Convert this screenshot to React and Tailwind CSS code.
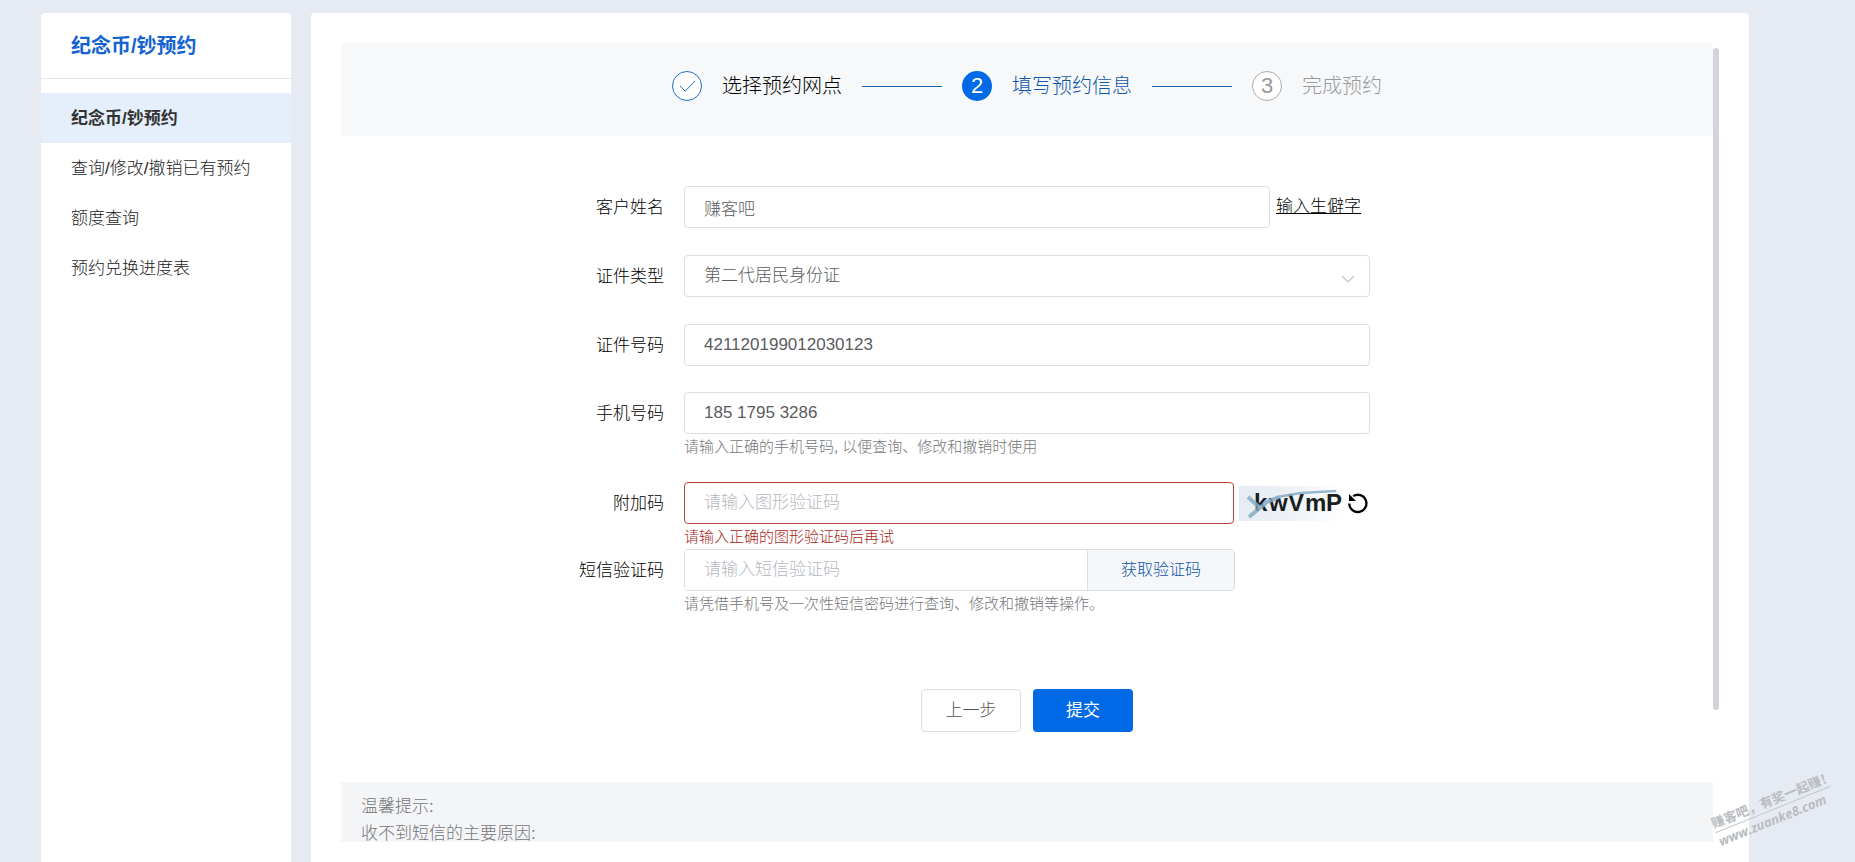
import { useState } from 'react';

const MENU = ['纪念币/钞预约', '查询/修改/撤销已有预约', '额度查询', '预约兑换进度表'];

const inputClass =
  'block h-[42px] w-full min-w-0 rounded border border-[#dcdfe2] bg-white px-[19px] text-[17px] text-[#5a5c60] placeholder-[#b4b8c0] outline-none focus:border-[#0069e5]';

function Sidebar() {
  return (
    <aside className="w-[250px] shrink-0 rounded-t bg-white">
      <h1 className="border-b border-[#e3e8ec] px-[30px] pt-[17px] pb-4 text-xl leading-8 font-bold text-[#1463d0]">
        纪念币/钞预约
      </h1>
      <nav className="pt-3.5">
        {MENU.map((item, i) => (
          <a
            key={item}
            href="#"
            className={`block h-[50px] px-[30px] text-[17px] leading-[52px] ${
              i === 0 ? 'bg-[#e4effb] font-bold text-[#333333]' : 'text-[#1c1c1c]'
            }`}
          >
            {item}
          </a>
        ))}
      </nav>
    </aside>
  );
}

function Steps() {
  return (
    <ol className="flex h-[93px] items-start justify-center gap-5 rounded bg-[#f6f8fa] pt-7 text-xl leading-[30px]">
      <li className="flex items-center gap-5">
        <svg className="h-[30px] w-[30px]" viewBox="0 0 30 30" fill="none" stroke="#1d6fc4">
          <circle cx="15" cy="15" r="14.5" fill="#ffffff" />
          <path d="M8 15l5.2 5.2L23 10" />
        </svg>
        <span className="text-black">选择预约网点</span>
      </li>
      <li aria-hidden="true" className="mt-[15px] h-px w-20 bg-[#1d64ad]" />
      <li className="flex items-center gap-5">
        <span className="h-[30px] w-[30px] rounded-full bg-[#0069e5] text-center text-[22px] text-white">2</span>
        <span className="text-[#0f55a8]">填写预约信息</span>
      </li>
      <li aria-hidden="true" className="mt-[15px] h-px w-20 bg-[#1d64ad]" />
      <li className="flex items-center gap-5 text-[#98999c]">
        <span className="h-[30px] w-[30px] rounded-full border border-[#a9abae] bg-white text-center text-[22px] leading-7">
          3
        </span>
        <span>完成预约</span>
      </li>
    </ol>
  );
}

function Field({ id, label, hint, error, className = '', children }) {
  return (
    <div className={`grid grid-cols-4 ${className}`}>
      <label htmlFor={id} className="h-[42px] pr-5 text-right text-[17px] leading-[44px] text-black">
        {label}
      </label>
      <div className="col-span-2">
        {children}
        {hint && (
          <p className={`text-[15px] leading-[25px] ${error ? 'text-[#a82418]' : 'text-[#74767a]'}`}>{hint}</p>
        )}
      </div>
    </div>
  );
}

function Captcha() {
  return (
    <svg className="h-[35px] w-[104px]" viewBox="0 0 104 35" role="img" aria-label="图形验证码">
      <defs>
        <linearGradient id="captcha-bg" x1="0" y1="0" x2="1" y2="0">
          <stop offset="0" stopColor="#e6ecf3" />
          <stop offset="0.5" stopColor="#eef2f6" />
          <stop offset="1" stopColor="#ffffff" />
        </linearGradient>
      </defs>
      <rect width="104" height="35" fill="url(#captcha-bg)" />
      <text
        x="15 30 49 66 87"
        y="25"
        fontSize="24"
        fontWeight="700"
        fill="#1c1d20"
        fontFamily="'Liberation Sans', sans-serif"
      >
        kwVmP
      </text>
      <g fill="none" stroke="#86abc6" strokeOpacity="0.85">
        <path d="M10 31L28 16L40 11" strokeWidth="4" />
        <path d="M38 11L62 7L97 5" strokeWidth="2.5" />
        <path d="M9 11L20 21" strokeWidth="4" />
      </g>
    </svg>
  );
}

function BookingForm() {
  const [name, setName] = useState('赚客吧');
  const [idNumber, setIdNumber] = useState('421120199012030123');
  const [phone, setPhone] = useState('185 1795 3286');
  const [captcha, setCaptcha] = useState('');
  const [smsCode, setSmsCode] = useState('');

  return (
    <form className="mt-[50px]" onSubmit={(e) => e.preventDefault()}>
      <Field id="name" label="客户姓名" className="mb-[27px]">
        <div className="flex items-center gap-1.5">
          <input id="name" type="text" value={name} onChange={(e) => setName(e.target.value)} className={inputClass} />
          <a href="#" className="w-[94px] shrink-0 text-[17px] text-black underline">
            输入生僻字
          </a>
        </div>
      </Field>

      <Field id="id-type" label="证件类型" className="mb-[27px]">
        <div className="relative">
          <select id="id-type" className={`${inputClass} appearance-none`}>
            <option>第二代居民身份证</option>
            <option>护照</option>
          </select>
          <svg
            className="pointer-events-none absolute top-5 right-[15px] h-2 w-[14px]"
            viewBox="0 0 14 8"
            fill="none"
            stroke="#c0c4cc"
            strokeWidth="1.2"
          >
            <path d="M1 1l6 6 6-6" />
          </svg>
        </div>
      </Field>

      <Field id="id-number" label="证件号码" className="mb-[26px]">
        <input
          id="id-number"
          type="text"
          value={idNumber}
          onChange={(e) => setIdNumber(e.target.value)}
          className={inputClass}
        />
      </Field>

      <Field id="phone" label="手机号码" hint="请输入正确的手机号码, 以便查询、修改和撤销时使用" className="mb-[23px]">
        <input id="phone" type="tel" value={phone} onChange={(e) => setPhone(e.target.value)} className={inputClass} />
      </Field>

      <Field id="captcha" label="附加码" hint="请输入正确的图形验证码后再试" error>
        <div className="flex items-center gap-[5px]">
          <input
            id="captcha"
            type="text"
            placeholder="请输入图形验证码"
            value={captcha}
            onChange={(e) => setCaptcha(e.target.value)}
            className="block h-[42px] min-w-0 flex-1 rounded border border-[#b5443a] bg-white px-[19px] text-[17px] text-[#5a5c60] placeholder-[#b4b8c0] outline-none"
          />
          <div className="flex w-[131px] shrink-0 items-center gap-1">
            <Captcha />
            <button type="button" aria-label="刷新验证码">
              <svg className="h-[22px] w-[22px]" viewBox="0 0 22 22" fill="none" stroke="#000000" strokeWidth="2.3">
                <path d="M2.2 11.5a8.6 8.6 0 1 0 4-7.4" />
                <path d="M2 2v7h7z" fill="#000000" stroke="none" />
              </svg>
            </button>
          </div>
        </div>
      </Field>

      <Field id="sms" label="短信验证码" hint="请凭借手机号及一次性短信密码进行查询、修改和撤销等操作。">
        <div className="mr-[135px] flex h-[42px] overflow-hidden rounded border border-[#dcdfe2]">
          <input
            id="sms"
            type="text"
            placeholder="请输入短信验证码"
            value={smsCode}
            onChange={(e) => setSmsCode(e.target.value)}
            className="min-w-0 flex-1 bg-white px-[19px] text-[17px] text-[#5a5c60] placeholder-[#b4b8c0] outline-none"
          />
          <button
            type="button"
            className="w-[147px] shrink-0 border-l border-[#dcdfe2] bg-[#f5f7fa] text-base text-[#0f55a8]"
          >
            获取验证码
          </button>
        </div>
      </Field>

      <div className="mt-[73px] flex justify-center gap-3">
        <button
          type="button"
          className="h-[43px] w-[100px] rounded border border-[#dcdfe2] bg-white text-[17px] text-[#505256]"
        >
          上一步
        </button>
        <button type="submit" className="h-[43px] w-[100px] rounded bg-[#0069e5] text-[17px] font-normal text-white">
          提交
        </button>
      </div>
    </form>
  );
}

export default function App() {
  return (
    <div className="flex h-screen gap-5 overflow-hidden bg-[#e6ebf3] pt-[13px] pr-[106px] pl-[41px] font-['Liberation_Sans','Noto_Sans_CJK_SC',sans-serif] font-light">
      <Sidebar />

      <main className="flex min-w-0 flex-1 rounded-t bg-white px-[30px] pt-[30px] pb-5">
        <div className="min-w-0 flex-1 overflow-hidden">
          <Steps />
          <BookingForm />
          <section className="mt-[50px] bg-[#f4f5f7] px-5 pt-[11px] pb-6 text-[17px] leading-[27px] text-[#74767a]">
            <p>温馨提示:</p>
            <p>收不到短信的主要原因:</p>
          </section>
        </div>
        <div className="w-1.5 shrink-0 pt-[5px]">
          <div className="h-5/6 rounded-full bg-[#d2d4d9]" />
        </div>
      </main>

      <div className="pointer-events-none absolute right-5 bottom-[34px] w-[124px] -rotate-22 font-['Open_Sans','Noto_Sans_CJK_SC',sans-serif] whitespace-nowrap text-[#b9bcc0]">
        <p className="border-b border-[#c4c7ca] text-[13px] leading-[18px] font-bold">赚客吧，有奖一起赚！</p>
        <p className="text-[13px] leading-[18px] font-bold italic">www.zuanke8.com</p>
      </div>
    </div>
  );
}
